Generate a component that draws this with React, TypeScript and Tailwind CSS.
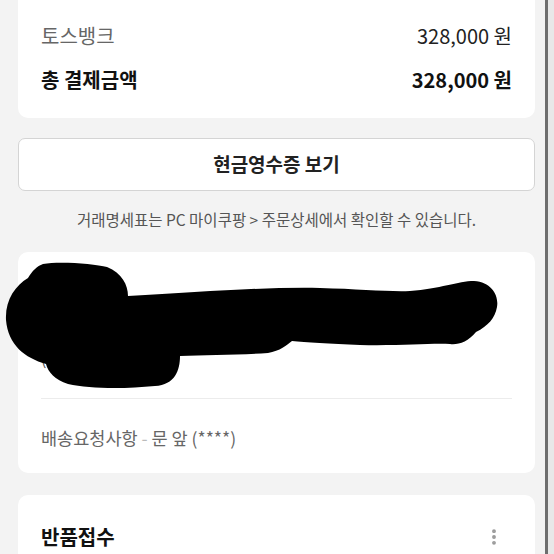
import { MoreVertical } from "lucide-react";

const font = { fontFamily: '"Noto Sans CJK KR", "Noto Sans", sans-serif' };

const PaymentRow = ({ label, amount, bold }: { label: string; amount: string; bold?: boolean }) => (
  <div className="flex items-center justify-between h-[24px]">
    <span className={bold ? "text-[20px] font-bold text-[#111]" : "text-[20px] text-[#666]"}>{label}</span>
    <span className={bold ? "text-[20px] font-bold text-[#111]" : "text-[20px] text-[#222]"}>{amount}</span>
  </div>
);

// 주소 가림 낙서
const Scribble = () => (
  <svg
    className="absolute left-0 top-0 overflow-visible pointer-events-none"
    width={517}
    height={160}
    viewBox="0 0 517 160"
  >
    <g transform="translate(-18,-252)">
      <path
        fill="#000"
        d="M43 264 C60 261 95 264 107 267 C122 273 128 285 128 296
           C200 292 260 287 320 288 C360 289 390 292 410 291 C440 289 458 281 474 281
           C492 282 499 296 497 307 C495 318 488 326 476 332 C468 342 458 345 450 344
           C430 343 400 346 360 345 C330 344 305 342 292 341 C287 345 280 351 268 353
           C240 355 205 355 180 356 C180 370 175 385 155 386 C125 389 90 389 68 384
           C55 380 48 372 46 364 C25 358 8 345 6 320 C5 300 15 286 28 278 C32 271 37 266 43 264 Z"
      />
    </g>
  </svg>
);

export default function App() {
  return (
    <div className="flex w-[554px] h-[554px] overflow-hidden" style={font}>
      <main className="w-[545px] shrink-0 bg-[#f3f3f3] pl-[18px] pr-[10px]">
        <section className="bg-white rounded-b-[10px] px-[23px] pt-[24px] pb-[26px] flex flex-col gap-[20px]">
          <PaymentRow label="토스뱅크" amount="328,000 원" />
          <PaymentRow label="총 결제금액" amount="328,000 원" bold />
        </section>

        <button className="mt-[20px] w-full h-[53px] bg-white border border-[#d4d4d4] rounded-[7px] flex items-center justify-center text-[19px] font-semibold text-[#222]">
          현금영수증 보기
        </button>

        <p className="mt-[18px] h-[20px] leading-[20px] text-center text-[15.5px] text-[#555]">
          거래명세표는 PC 마이쿠팡 &gt; 주문상세에서 확인할 수 있습니다.
        </p>

        <section className="relative mt-[23px] bg-white rounded-[10px] h-[221px] flex flex-col">
          <div className="h-[146px] px-[23px] pt-[30px] flex flex-col gap-[8px] text-[16px] text-[#555]">
            <span className="text-[19px] font-bold text-[#111]">받는 사람</span>
            <span>010-****-****</span>
            <span className="-mt-[5px]">(0623)</span>
          </div>
          <div className="mx-[23px] border-t border-[#ececec]" />
          <div className="px-[23px] pt-[27px] text-[17.5px] text-[#666] leading-[24px]">
            배송요청사항 <span className="text-[#bbb]">-</span> 문 앞 (****)
          </div>
          <Scribble />
        </section>

        <section className="mt-[22px] bg-white rounded-t-[10px] h-[80px] pl-[23px] pr-[31px] pt-[28px] flex items-start justify-between">
          <h2 className="text-[20px] font-bold text-[#111] leading-[28px]">반품접수</h2>
          <MoreVertical className="mt-[4px] w-[20px] h-[20px] text-[#999]" strokeWidth={2.6} />
        </section>
      </main>
      <div className="w-[3px] shrink-0 bg-[#6e6e6e]" />
      <div className="flex-1 bg-[#e8e8e8]" />
    </div>
  );
}
